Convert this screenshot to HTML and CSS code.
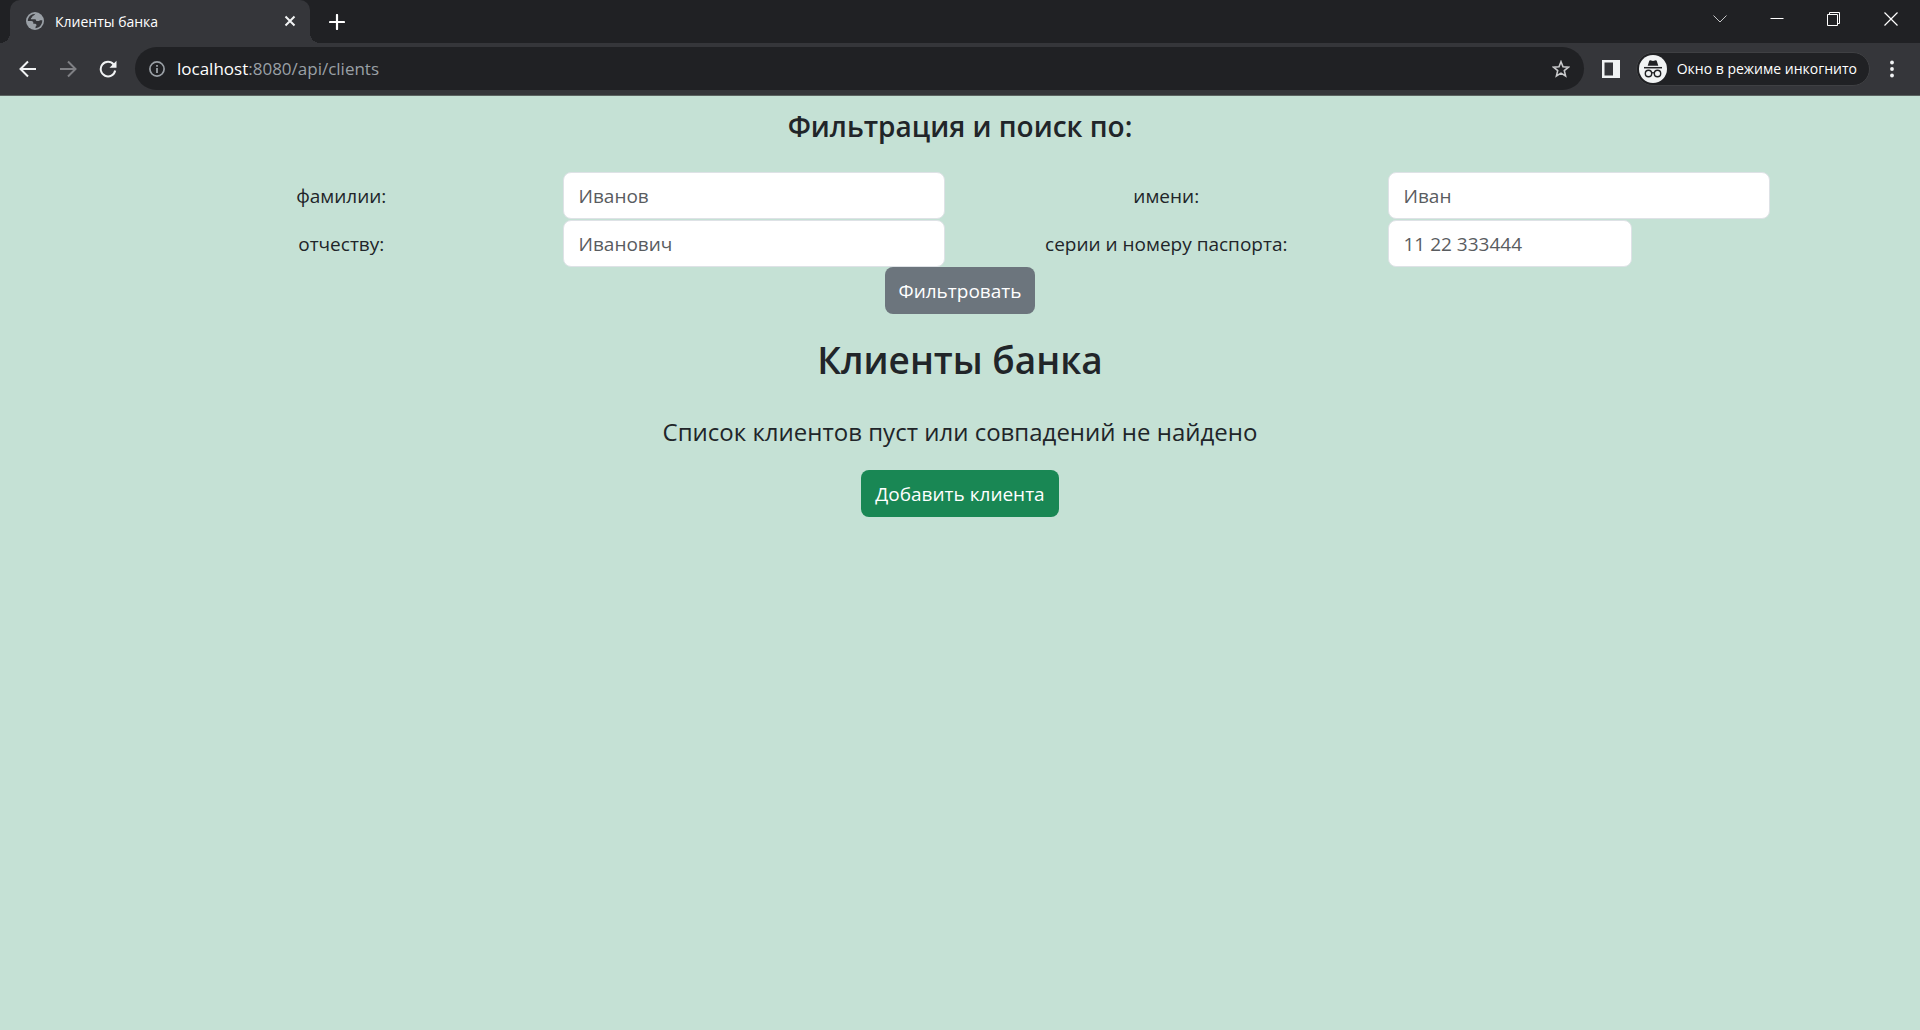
FILE: index.html
```html
<!DOCTYPE html>
<html lang="ru">
<head>
<meta charset="utf-8">
<meta name="viewport" content="width=device-width, initial-scale=1">
<title>Клиенты банка</title>
<link rel="stylesheet" href="styles.css">
</head>
<body>
<header class="browser">
  <div class="tabstrip">
    <div class="tab">
      <svg class="tab-icon" width="18" height="18" viewBox="0 0 18 18" aria-hidden="true"><circle cx="9" cy="9" r="9" fill="#9aa0a6"/><path d="M10 1.8C8.600 2 8.500 3.300 7.300 3.700C6.200 4 6.500 5 5.800 5.500C5 6 4.800 6.500 5 7.200H9C10 7.200 10.200 8 10.200 9H12.300C13.200 9 13.500 8.200 14.200 8.200H16.300C16.300 13 13 16 9.500 16.200V15C9.500 14.300 10.500 14.300 10.500 13.300C10.500 12 9.500 11.700 8.200 11.700H7.300V10.500C7.300 9.300 5.500 9 4.500 9H1.800C1.800 5 5 1.800 10 1.800Z" fill="#35363a"/><path d="M9.500 2.200C12 2 13.800 3.200 15.200 5.200C14 6.200 12.300 5.800 11.700 5.200C11.200 4.700 9.500 5.500 9 4.300C8.700 3.500 8.800 2.700 9.500 2.200Z" fill="#9aa0a6"/></svg>
      <span class="tab-title">Клиенты банка</span>
      <button class="icon-button tab-close" aria-label="Закрыть вкладку"><svg width="12" height="12" viewBox="0 0 12 12"><path d="M1.500 1.500L10.500 10.500M10.500 1.500L1.500 10.500" fill="none" stroke="#f1f3f4" stroke-width="2"/></svg></button>
    </div>
    <button class="icon-button new-tab" aria-label="Новая вкладка"><svg width="16" height="16" viewBox="0 0 16 16"><path d="M8 1V15M1 8H15" fill="none" stroke="#fff" stroke-width="2.200" stroke-linecap="round"/></svg></button>
    <div class="window-controls">
      <button class="icon-button" aria-label="Поиск вкладок"><svg width="14" height="14" viewBox="0 0 14 14"><path d="M.5 3.500L7 10L13.500 3.500" fill="none" stroke="#c4c5c7"/></svg></button>
      <button class="icon-button" aria-label="Свернуть"><svg width="14" height="14" viewBox="0 0 14 14"><path d="M.5 6.500H13.500" stroke="#fff"/></svg></button>
      <button class="icon-button" aria-label="Восстановить"><svg width="14" height="14" viewBox="0 0 14 14"><path d="M.5 2.500H10.500V13.500H.5ZM2.500 2.500V.5H12.500V11.500H10.500" fill="none" stroke="#fff"/></svg></button>
      <button class="icon-button" aria-label="Закрыть"><svg width="14" height="14" viewBox="0 0 14 14"><path d="M.5 .5L13.500 13.500M13.500 .5L.5 13.500" stroke="#fff" stroke-width="1.200"/></svg></button>
    </div>
  </div>
  <div class="toolbar">
    <nav class="history" aria-label="Навигация">
      <button class="icon-button" aria-label="Назад"><svg width="18" height="18" viewBox="0 0 18 18"><path d="M17 9H2M9 1.500L1.500 9L9 16.500" fill="none" stroke="#f1f3f4" stroke-width="2"/></svg></button>
      <button class="icon-button" aria-label="Вперёд"><svg width="18" height="18" viewBox="0 0 18 18"><path d="M1 9H16M9 1.500L16.500 9L9 16.500" fill="none" stroke="#7f8084" stroke-width="2"/></svg></button>
      <button class="icon-button" aria-label="Обновить"><svg width="18" height="18" viewBox="0 0 18 18"><path d="M14.700 4.500A7.300 7.300 0 1 0 16.200 10.500" fill="none" stroke="#f1f3f4" stroke-width="2"/><path d="M17.500 .8V7.800H10.500Z" fill="#f1f3f4"/></svg></button>
    </nav>
    <div class="omnibox">
      <svg width="16" height="16" viewBox="0 0 16 16" aria-hidden="true"><circle cx="8" cy="8" r="7.100" fill="none" stroke="#9aa0a6" stroke-width="1.700"/><path d="M8 7V12M8 4V5.800" stroke="#9aa0a6" stroke-width="1.800"/></svg>
      <span class="url"><span class="url-host">localhost</span>:8080/api/clients</span>
      <button class="icon-button bookmark" aria-label="Добавить в закладки"><svg width="18" height="18" viewBox="0 0 18 18"><path d="M9 1.700L11 6.700L16.500 7.100L12.300 10.600L13.600 16L9 13.100L4.400 16L5.700 10.600L1.500 7.100L7 6.700Z" fill="none" stroke="#c8c9cb" stroke-width="1.600"/></svg></button>
    </div>
    <button class="icon-button side-panel" aria-label="Боковая панель"><svg width="18" height="18" viewBox="0 0 18 18"><path d="M0 0H18V18H0ZM2.500 2.500V15.500H11V2.500Z" fill="#f1f3f4" fill-rule="evenodd"/></svg></button>
    <button class="profile"><svg width="28" height="28" viewBox="0 0 28 28" aria-hidden="true"><circle cx="14" cy="14" r="14" fill="#f1f3f4"/><path d="M10.300 5.700Q10.600 5.200 11.200 5.300L14 6L16.800 5.300Q17.400 5.200 17.700 5.700L19.300 10.700H8.700Z" fill="#202124"/><path d="M5 12.700H23" stroke="#202124" stroke-width="1.500"/><g fill="none" stroke="#202124" stroke-width="1.400"><circle cx="9.500" cy="18.500" r="3.200"/><circle cx="18.500" cy="18.500" r="3.200"/><path d="M12.700 18Q14 17.200 15.300 18"/></g></svg><span>Окно в режиме инкогнито</span></button>
    <button class="icon-button menu" aria-label="Меню"><svg width="4" height="18" viewBox="0 0 4 18"><g fill="#f1f3f4"><circle cx="2" cy="2.500" r="1.900"/><circle cx="2" cy="9" r="1.900"/><circle cx="2" cy="15.500" r="1.900"/></g></svg></button>
  </div>
</header>
<main class="page">
  <h2 class="filter-title">Фильтрация и поиск по:</h2>
  <form class="container">
    <div class="filters">
      <label for="surname">фамилии:</label>
      <input class="control" id="surname" type="text" placeholder="Иванов">
      <label for="name">имени:</label>
      <input class="control" id="name" type="text" placeholder="Иван">
      <label for="patronymic">отчеству:</label>
      <input class="control" id="patronymic" type="text" placeholder="Иванович">
      <label for="passport">серии и номеру паспорта:</label>
      <input class="control control-short" id="passport" type="text" placeholder="11 22 333444">
    </div>
    <button class="btn btn-secondary" type="submit">Фильтровать</button>
  </form>
  <h1 class="title">Клиенты банка</h1>
  <p class="empty">Список клиентов пуст или совпадений не найдено</p>
  <button class="btn btn-success" type="button">Добавить клиента</button>
</main>
</body>
</html>
```

FILE: styles.css
```css
* {
  box-sizing: border-box;
}

body {
  display: flex;
  flex-direction: column;
  min-height: 100vh;
  margin: 0;
  background: #c5e1d5;
  color: #212529;
  font-family: "Open Sans", "Noto Sans", sans-serif;
  font-size: 19px;
}

button,
input {
  font: inherit;
}

svg {
  display: block;
  flex: none;
}

/* Browser frame */
.browser {
  color: #fff;
  font-size: 14px;
}

.tabstrip {
  display: flex;
  height: 43px;
  padding-left: 10px;
  background: #202124;
}

.icon-button {
  display: flex;
  align-items: center;
  justify-content: center;
  padding: 0;
  border: 0;
  background: none;
}

.tab {
  position: relative;
  display: flex;
  align-items: center;
  width: 300px;
  padding: 0 14px 1px 16px;
  border-radius: 10px 10px 0 0;
  background: #35363a;
}

/* Outward curves at the foot of the active tab */
.tab::before,
.tab::after {
  content: "";
  position: absolute;
  bottom: 0;
  width: 10px;
  height: 10px;
}

.tab::before {
  right: 100%;
  background: radial-gradient(circle at 0 0, transparent 10px, #35363a 10px);
}

.tab::after {
  left: 100%;
  background: radial-gradient(circle at 100% 0, transparent 10px, #35363a 10px);
}

.tab-title {
  flex: 1;
  padding-left: 11px;
}

.new-tab {
  width: 54px;
}

.window-controls {
  display: flex;
  height: 37px;
  margin-left: auto;
  padding-right: 1px;
}

.window-controls .icon-button {
  width: 57px;
}

.toolbar {
  display: flex;
  align-items: center;
  height: 53px;
  padding: 0 18px 1px 8px;
  border-bottom: 1px solid #5b6360;
  background: #35363a;
}

.history {
  display: flex;
}

.history .icon-button {
  width: 40px;
  height: 40px;
}

.omnibox {
  display: flex;
  flex: 1;
  align-items: center;
  height: 43px;
  margin-left: 7px;
  padding: 0 14px;
  border-radius: 22px;
  background: #202124;
}

.url {
  flex: 1;
  padding-left: 12px;
  color: #9aa0a6;
  font-size: 17px;
}

.url-host {
  color: #fff;
}

.side-panel {
  margin: 0 16px 0 18px;
}

.profile {
  display: flex;
  align-items: center;
  gap: 10px;
  height: 34px;
  padding: 0 12px 0 2px;
  border: 1px solid #3f4043;
  border-radius: 17px;
  background: #202124;
  color: #fff;
}

.menu {
  width: 20px;
  margin-left: 12px;
}

/* Page */
.page {
  display: flex;
  flex-direction: column;
  align-items: center;
  text-align: center;
}

.filter-title {
  margin: 12px 0 28px;
  font-size: 28px;
  font-weight: 600;
  line-height: 36px;
}

.container {
  width: 100%;
  max-width: 1650px;
}

.filters {
  display: grid;
  grid-template-columns: repeat(4, 1fr);
  row-gap: 1px;
  align-items: center;
}

.control {
  width: auto;
  height: 47px;
  margin: 0 15px;
  padding: 0 15px;
  border: 1px solid #dee2e6;
  border-radius: 8px;
  background: #fff;
  color: #212529;
}

.control-short {
  justify-self: start;
  width: 244px;
}

.control::placeholder {
  color: #595c5f;
  opacity: 1;
}

.btn {
  height: 47px;
  padding: 0 14px;
  border: 0;
  border-radius: 8px;
  color: #fff;
}

.btn-secondary {
  background: #6c757d;
}

.btn-success {
  background: #198754;
}

.title {
  margin: 21px 0 28px;
  font-size: 37px;
  font-weight: 600;
  line-height: 50px;
}

.empty {
  margin: 0 0 19px;
  font-size: 24px;
  line-height: 38px;
}
```
